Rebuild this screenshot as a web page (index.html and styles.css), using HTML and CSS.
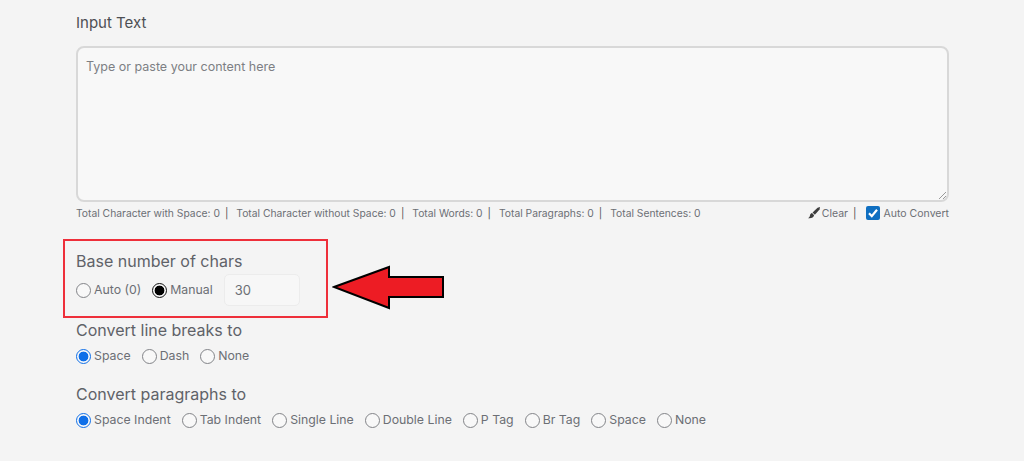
FILE: index.html
```html
<!DOCTYPE html>
<html lang="en">
<head>
<meta charset="utf-8">
<title>Input Text</title>
<link rel="stylesheet" href="styles.css">
</head>
<body>
<main class="page">
  <h2 class="label first">Input Text</h2>
  <div class="textarea">
    <span class="placeholder">Type or paste your content here</span>
    <svg class="grip" width="8" height="8" viewBox="0 0 8 8"><path d="M1 8 8 1M5 8 8 5" stroke="#9a9a9a" fill="none"/></svg>
  </div>
  <div class="stats">
    <div class="stats-left">
      <span>Total Character with Space: 0</span><span class="sep">|</span>
      <span>Total Character without Space: 0</span><span class="sep">|</span>
      <span>Total Words: 0</span><span class="sep">|</span>
      <span>Total Paragraphs: 0</span><span class="sep">|</span>
      <span>Total Sentences: 0</span>
    </div>
    <div class="stats-right">
      <svg class="brush" width="12" height="12" viewBox="0 0 11 11"><path d="M11 0 10.6 2.2 6.3 7 4.2 5 8.8 .8Z" fill="#3d3d3d"/><path d="M3.7 5.6 5.6 7.5C5.2 9.5 3.2 10.6 0 10.2 1.6 9.4 1.6 8.6 1.9 7.4 2.1 6.5 2.8 5.8 3.7 5.6Z" fill="#3d3d3d"/></svg>
      <span class="right-text">Clear</span><span class="sep-r">|</span>
      <span class="check"><svg width="14" height="14" viewBox="0 0 14 14"><path d="M3 7.2 5.8 10.2 11 3.8" stroke="#fff" stroke-width="2.2" fill="none"/></svg></span>
      <span class="right-text">Auto Convert</span>
    </div>
  </div>
  <section class="callout">
    <h3 class="label">Base number of chars</h3>
    <div class="radios">
      <label class="radio"><i class="dot"></i>Auto (0)</label>
      <label class="radio"><i class="dot on-black"></i>Manual</label>
      <span class="num">30</span>
    </div>
  </section>
  <svg class="arrow" width="114" height="48" viewBox="0 0 114 48"><path d="M2 23 57 3V13H111V33H57V44Z" fill="#ed1c24" stroke="#000" stroke-width="2"/></svg>
  <section class="group lines">
    <h3 class="label">Convert line breaks to</h3>
    <div class="radios">
      <label class="radio"><i class="dot on-blue"></i>Space</label>
      <label class="radio"><i class="dot"></i>Dash</label>
      <label class="radio"><i class="dot"></i>None</label>
    </div>
  </section>
  <section class="group paras">
    <h3 class="label">Convert paragraphs to</h3>
    <div class="radios">
      <label class="radio"><i class="dot on-blue"></i>Space Indent</label>
      <label class="radio"><i class="dot"></i>Tab Indent</label>
      <label class="radio"><i class="dot"></i>Single Line</label>
      <label class="radio"><i class="dot"></i>Double Line</label>
      <label class="radio"><i class="dot"></i>P Tag</label>
      <label class="radio"><i class="dot"></i>Br Tag</label>
      <label class="radio"><i class="dot"></i>Space</label>
      <label class="radio"><i class="dot"></i>None</label>
    </div>
  </section>
</main>
</body>
</html>
```
FILE: styles.css
```css
* { box-sizing: border-box; }
html, body { margin: 0; padding: 0; height: 100%; overflow: hidden; }
body { background: #f4f4f4; color: #6c6f75; font-family: "Inter", "Liberation Sans", sans-serif; }
.page { position: relative; width: 873px; margin-left: 76px; padding-top: 13px; }
.label { margin: 0; font-size: 16px; font-weight: 400; line-height: 20px; color: #5f6268; }
.label.first { font-size: 15px; color: #4d4f53; }
.textarea { position: relative; height: 156px; margin-top: 13px; padding: 11px 8px; background: #f8f8f8; border: 2px solid #d8d8d8; border-radius: 8px; }
.placeholder { font-size: 12.5px; line-height: 16px; color: #7d7f84; display: block; }
.grip { position: absolute; right: 1px; bottom: 1px; }
.stats { display: flex; justify-content: space-between; align-items: center; margin-top: 3px; height: 15px; font-size: 10.3px; color: #6c6f75; }
.stats-left { display: flex; align-items: center; gap: 0; }
.sep { margin: 0 8px 0 5px; color: #555; }
.stats-right { display: flex; align-items: center; font-size: 10.5px; }
.right-text { padding-top: 2px; }
.brush { margin-right: 2px; }
.sep-r { margin: 0 9px 0 5px; padding-top: 2px; color: #555; }
.check { display: flex; width: 14px; height: 14px; margin-right: 4px; background: #0f6fc1; border-radius: 2px; }
.callout { width: 265px; height: 79px; margin: 19px 0 0 -13px; padding: 10px 0 0 11px; border: 2px solid #ee2f3a; }
.radios { display: flex; align-items: center; gap: 11px; margin-top: 3px; font-size: 12.3px; }
.radio { display: flex; align-items: center; gap: 3px; line-height: 16px; }
.dot { width: 15px; height: 15px; border: 1px solid #828488; border-radius: 50%; background: #f8f8f8; flex: none; }
.on-black { border: 1.5px solid #111; background: radial-gradient(circle, #000 0 4.6px, #f8f8f8 5.2px); }
.on-blue { border: 1.5px solid #0f6fe8; background: radial-gradient(circle, #0f6fe8 0 4.6px, #f8f8f8 5.2px); }
.num { display: block; width: 76px; height: 32px; padding-left: 10px; line-height: 30px; font-size: 13px; background: #f7f7f7; border: 1px solid #ececec; border-radius: 5px; }
.arrow { position: absolute; left: 256px; top: 264px; }
.group.lines { margin-top: 2px; }
.group.paras { margin-top: 20px; }
.group .radios { margin-top: 8px; }
```
